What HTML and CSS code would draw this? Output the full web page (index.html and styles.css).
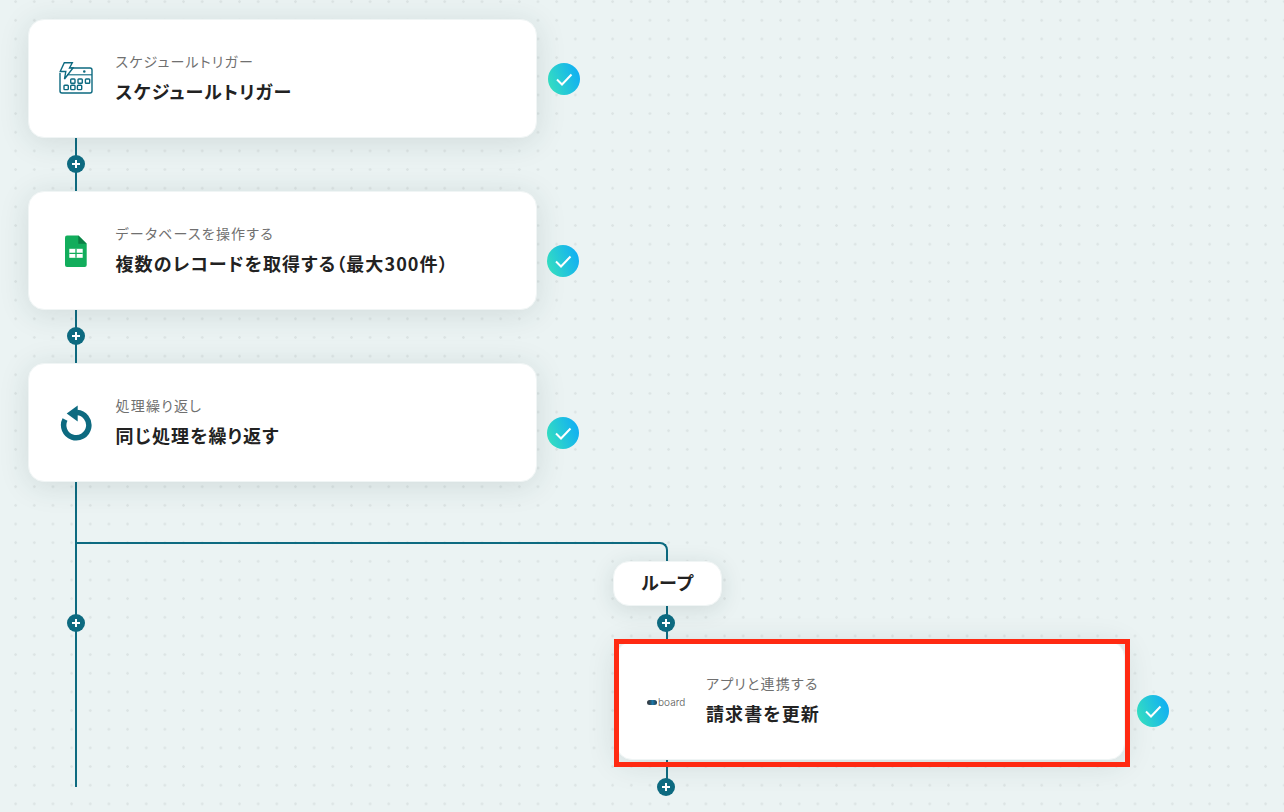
FILE: index.html
```html
<!DOCTYPE html>
<html lang="ja">
<head>
<meta charset="utf-8">
<title>フロー</title>
<link rel="stylesheet" href="styles.css">
</head>
<body>
<main class="canvas">
  <div class="line main-line"></div>
  <div class="line branch-top"></div>
  <div class="branch-corner"></div>
  <div class="line branch-line"></div>

  <article class="card n1">
    <svg class="icon" viewBox="0 0 36 36" fill="none" stroke="#0d6a80" stroke-width="1.400">
      <path d="M2 12 V30 a2 2 0 0 0 2 2 H32 a2 2 0 0 0 2-2 V9 a2 2 0 0 0-2-2 H13"/>
      <path d="M6.300 1.800 H14.300 L11.500 7 H15 L6.500 18 L7.800 10.500 H2.200 Z" fill="#fff"/>
      <path d="M9 13.800 H34" stroke-width="1.100"/>
      <circle cx="26.300" cy="10.500" r=".6" fill="#0d6a80"/>
      <rect x="12.700" y="18" width="4.300" height="4.300" rx=".8"/><rect x="20" y="18" width="4.300" height="4.300" rx=".8"/><rect x="27.400" y="18" width="4.300" height="4.300" rx=".8"/>
      <rect x="6" y="24.300" width="4.300" height="4.300" rx=".8"/><rect x="12.700" y="24.300" width="4.300" height="4.300" rx=".8"/><rect x="19.400" y="24.300" width="4.300" height="4.300" rx=".8"/>
    </svg>
    <div class="texts"><p class="label">スケジュールトリガー</p><h2 class="title">スケジュールトリガー</h2></div>
  </article>

  <article class="card n2">
    <svg class="icon" viewBox="0 0 36 36">
      <path d="M9 2.500 H20.500 L28.700 10.800 V32 a2 2 0 0 1-2 2 H9 a2 2 0 0 1-2-2 V4.500 a2 2 0 0 1 2-2 Z" fill="#12ad5c"/>
      <path d="M20.300 2.500 L28.700 10.800 H20.300 Z" fill="#0b7f45"/>
      <rect x="11.300" y="15.800" width="13.400" height="9" fill="#fff"/>
      <path d="M18 15.800 V24.800 M11.300 20.300 H24.700" stroke="#12ad5c" stroke-width="1.300"/>
    </svg>
    <div class="texts"><p class="label">データベースを操作する</p><h2 class="title">複数のレコードを取得する（最大300件）</h2></div>
  </article>

  <article class="card n3">
    <svg class="icon" viewBox="0 0 36 36" fill="none">
      <path d="M19 7.600 A12.600 12.600 0 1 1 7 14.500" stroke="#0d6a80" stroke-width="5.500"/>
      <path d="M19.700 .5 V16.500 L8.700 8.500 Z" fill="#0d6a80"/>
    </svg>
    <div class="texts"><p class="label">処理繰り返し</p><h2 class="title">同じ処理を繰り返す</h2></div>
  </article>

  <div class="pill">ループ</div>

  <article class="card n4">
    <div class="board-logo"><span class="board-mark"></span><span class="board-word">board</span></div>
    <div class="texts"><p class="label">アプリと連携する</p><h2 class="title">請求書を更新</h2></div>
  </article>
  <div class="highlight"></div>

  <span class="plus p1"></span>
  <span class="plus p2"></span>
  <span class="plus p3"></span>
  <span class="plus p4"></span>
  <span class="plus p5"></span>

  <span class="check c1"><svg viewBox="0 0 32 32"><path d="M9 16.500 L14 21.500 L23.500 11.500"/></svg></span>
  <span class="check c2"><svg viewBox="0 0 32 32"><path d="M9 16.500 L14 21.500 L23.500 11.500"/></svg></span>
  <span class="check c3"><svg viewBox="0 0 32 32"><path d="M9 16.500 L14 21.500 L23.500 11.500"/></svg></span>
  <span class="check c4"><svg viewBox="0 0 32 32"><path d="M9 16.500 L14 21.500 L23.500 11.500"/></svg></span>
</main>
</body>
</html>
```
FILE: styles.css
```css
* { box-sizing: border-box; margin: 0; padding: 0; }
html, body { width: 100%; height: 100%; overflow: hidden; }
body {
  background-color: #ebf3f3;
  font-family: "Noto Sans CJK JP", "Noto Sans", sans-serif;
  color: #222;
}
.canvas {
  position: relative;
  width: 1284px;
  height: 812px;
  background-image: radial-gradient(circle, #dce4e4 1.1px, transparent 1.5px);
  background-size: 18.67px 18.67px;
  background-position: 6.3px -7.7px;
}
.card {
  position: absolute;
  display: flex;
  align-items: center;
  width: 509px;
  height: 119px;
  padding-left: 29px;
  gap: 21.500px;
  background: #fff;
  border: 1px solid #f0f5f5;
  border-radius: 16px;
  box-shadow: 0 4px 30px rgba(30, 60, 65, .13);
  font-feature-settings: "palt";
}
.n1 { left: 28px; top: 19px; }
.n2 { left: 28px; top: 191px; }
.n3 { left: 28px; top: 363px; }
.n4 { left: 616px; top: 641px; padding-left: 30px; gap: 20px; }
.highlight {
  position: absolute;
  left: 614px;
  top: 639px;
  width: 516px;
  height: 128px;
  border: 5px solid #ff2a12;
}
.icon { width: 36px; height: 36px; flex: none; }
.texts { display: flex; flex-direction: column; gap: 6.500px; padding-bottom: 2.500px; }
.label { font-size: 14px; line-height: 20px; color: #707070; font-weight: 400; letter-spacing: 1.200px; }
.title { font-size: 18px; line-height: 26px; font-weight: 700; color: #222; letter-spacing: 1.100px; }
.line { position: absolute; background: #0d6a80; }
.main-line { left: 75px; top: 138px; width: 2px; height: 649px; }
.branch-top { left: 76px; top: 542px; width: 583px; height: 2px; }
.branch-corner {
  position: absolute;
  left: 655px;
  top: 542px;
  width: 13px;
  height: 13px;
  border-top: 2px solid #0d6a80;
  border-right: 2px solid #0d6a80;
  border-top-right-radius: 8px;
}
.branch-line { left: 666px; top: 555px; width: 2px; height: 232px; }
.pill {
  position: absolute;
  left: 613px;
  top: 561px;
  width: 109px;
  height: 45px;
  padding-bottom: 3px;
  display: flex;
  align-items: center;
  justify-content: center;
  background: #fff;
  border: 1px solid #f0f5f5;
  border-radius: 16px;
  font-size: 18px;
  font-weight: 700;
  box-shadow: 0 4px 22px rgba(30, 60, 65, .13);
}
.plus {
  position: absolute;
  width: 18px;
  height: 18px;
  border-radius: 50%;
  background-color: #0d6a80;
  background-image: linear-gradient(#fff, #fff), linear-gradient(#fff, #fff);
  background-size: 8px 2px, 2px 8px;
  background-position: center;
  background-repeat: no-repeat;
}
.p1 { left: 67px; top: 155px; }
.p2 { left: 67px; top: 327px; }
.p3 { left: 67px; top: 614px; }
.p4 { left: 657px; top: 614px; }
.p5 { left: 657px; top: 778px; }
.check {
  position: absolute;
  width: 32px;
  height: 32px;
  border-radius: 50%;
  background: linear-gradient(70deg, #33dcc2 12%, #12b0f2 88%);
}
.check svg { display: block; width: 32px; height: 32px; fill: none; stroke: #fff; stroke-width: 2; }
.c1 { left: 548px; top: 63px; }
.c2 { left: 547px; top: 245px; }
.c3 { left: 547px; top: 417px; }
.c4 { left: 1137px; top: 695px; }
.board-logo { display: flex; align-items: center; gap: 1px; width: 39px; flex: none; margin-top: 3px; }
.board-mark {
  width: 10px;
  height: 5px;
  border-radius: 3px;
  background: linear-gradient(90deg, #333f48 0 20%, #1b78a8 55%, #23394a);
  flex: none;
}
.board-word { font-family: "Inter", sans-serif; font-weight: 300; font-size: 10px; line-height: 10px; color: #555; letter-spacing: .1px; }
```
